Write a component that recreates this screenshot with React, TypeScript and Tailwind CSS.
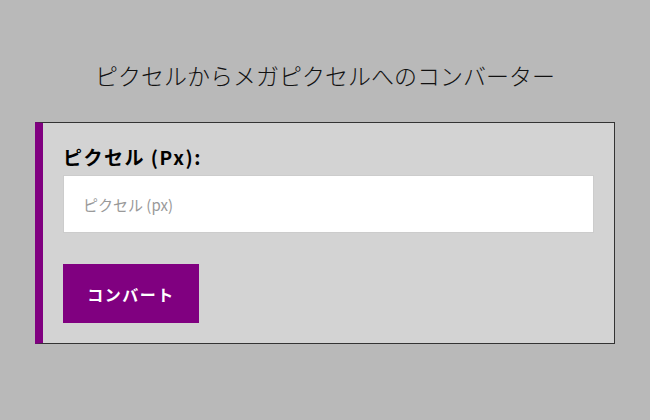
export default function App() {
  return (
    <div
      className="w-[650px] h-[420px] bg-[#b9b9b9] overflow-hidden"
      style={{ fontFamily: '"Noto Sans CJK JP", "Noto Sans", sans-serif' }}
    >
      <h1 className="pt-[57px] text-center text-[23px] leading-[36px] font-light text-[#111]">
        ピクセルからメガピクセルへのコンバーター
      </h1>
      <div className="ml-[35px] mt-[29px] w-[580px] border border-[#333] border-l-[8px] border-l-[#800080] bg-[#d3d3d3] px-[20px] pt-[20px] pb-[20px]">
        <label className="block text-[19px] leading-[27px] font-bold text-black mb-[5px] tracking-[1.5px]">
          ピクセル (Px):
        </label>
        <input
          type="text"
          placeholder="ピクセル (px)"
          className="block w-full h-[58px] bg-white border border-[#ccc] px-[19px] text-[15px] text-black placeholder:text-[#999] outline-none"
        />
        <button className="mt-[31px] w-[136px] h-[59px] bg-[#800080] text-white text-[16px] font-bold tracking-[1.5px]">
          コンバート
        </button>
      </div>
    </div>
  );
}
